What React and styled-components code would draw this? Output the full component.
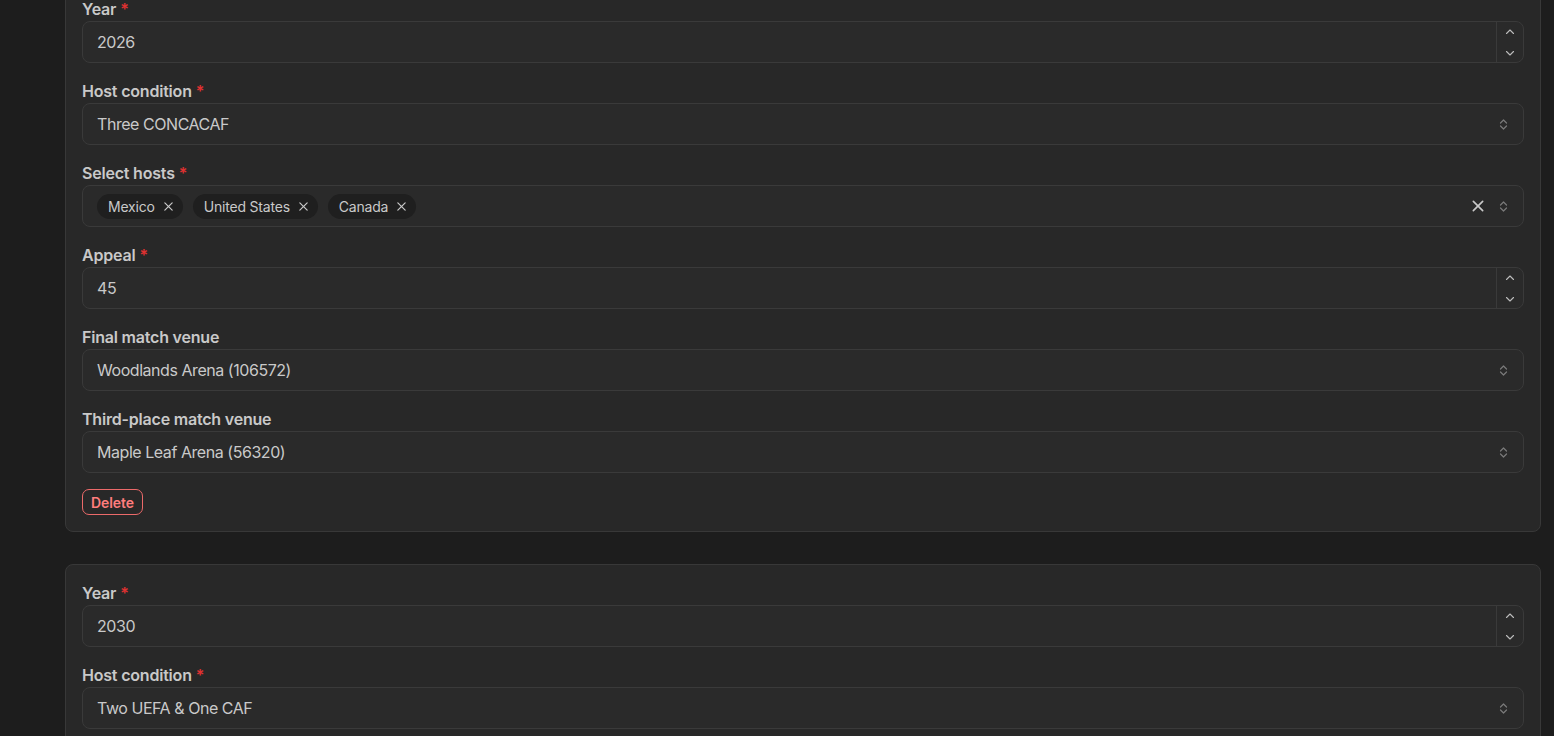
import React from 'react';
import styled, { createGlobalStyle } from 'styled-components';

const GlobalStyle = createGlobalStyle`
  html, body {
    margin: 0;
    padding: 0;
    background: #1d1d1d;
    overflow: hidden;
  }
  * { box-sizing: border-box; }
`;

const Page = styled.div`
  min-height: 100vh;
  padding: 0 13px 0 65px;
  font-family: Inter, "Noto Sans", sans-serif;
  color: #c9c9c9;
`;

const List = styled.div`
  margin-top: -20px;
  display: flex;
  flex-direction: column;
  gap: 32px;
`;

const Card = styled.section`
  background: #282828;
  border: 1px solid #383838;
  border-radius: 8px;
  padding: 16px;
  display: flex;
  flex-direction: column;
  gap: 16px;
`;

const Field = styled.div`
  display: flex;
  flex-direction: column;
`;

const Label = styled.label`
  font-size: 16px;
  font-weight: 600;
  line-height: 22px;
  margin-top: 1px;
  margin-bottom: 1px;
  letter-spacing: -0.2px;
  color: #c9c9c9;
`;

const Star = styled.span`
  color: #e03131;
  margin-left: 4px;
`;

const Box = styled.div`
  height: 42px;
  border: 1px solid #3a3a3a;
  border-radius: 8px;
  background: #2a2a2a;
  display: flex;
  align-items: center;
  padding-left: 14px;
  font-size: 16px;
  letter-spacing: -0.45px;
  color: #c9c9c9;
`;

const Value = styled.div`
  flex: 1;
`;

const Controls = styled.div`
  width: 27px;
  height: 100%;
  border-left: 1px solid #3a3a3a;
  display: flex;
  flex-direction: column;
  align-items: center;
  justify-content: space-between;
  padding: 4px 0 3px;
  color: #bdbdbd;
`;

const Chevrons = styled.div`
  width: 40px;
  display: flex;
  align-items: center;
  justify-content: center;
  color: #7a7a7a;
`;

const Pills = styled.div`
  flex: 1;
  display: flex;
  gap: 10px;
`;

const Pill = styled.span`
  height: 25px;
  border-radius: 999px;
  background: #1f1f1f;
  display: inline-flex;
  align-items: center;
  gap: 8px;
  padding: 0 9px 0 11px;
  font-size: 14px;
  letter-spacing: -0.2px;
  color: #c9c9c9;
`;

const Clear = styled.div`
  width: 20px;
  margin-right: -5px;
  display: flex;
  justify-content: center;
  color: #c9c9c9;
`;

const DangerButton = styled.button`
  align-self: flex-start;
  height: 26px;
  padding: 0 8px;
  border: 1px solid #ec6a6a;
  border-radius: 7px;
  background: transparent;
  color: #ff7d7d;
  font-family: inherit;
  font-size: 14px;
  font-weight: 600;
  letter-spacing: -0.1px;
`;

const Up = () => (
  <svg width="12" height="12" viewBox="0 0 24 24" fill="none" stroke="currentColor" strokeWidth="2.2" strokeLinecap="round" strokeLinejoin="round">
    <path d="M5 15l7-7 7 7" />
  </svg>
);

const Down = () => (
  <svg width="12" height="12" viewBox="0 0 24 24" fill="none" stroke="currentColor" strokeWidth="2.2" strokeLinecap="round" strokeLinejoin="round">
    <path d="M5 9l7 7 7-7" />
  </svg>
);

const UpDown = () => (
  <svg width="15" height="15" viewBox="0 0 15 15" fill="none">
    <path d="M4.5 6L7.5 3L10.5 6M4.5 9L7.5 12L10.5 9" stroke="currentColor" strokeWidth="1.2" strokeLinecap="round" strokeLinejoin="round" />
  </svg>
);

const Close = ({ size = 12, width = 1.5 }) => (
  <svg width={size} height={size} viewBox="0 0 12 12" fill="none" stroke="currentColor" strokeWidth={width} strokeLinecap="round">
    <path d="M2 2l8 8M10 2l-8 8" />
  </svg>
);

const NumberField = ({ label, value }) => (
  <Field>
    <Label>{label}<Star>*</Star></Label>
    <Box>
      <Value>{value}</Value>
      <Controls><Up /><Down /></Controls>
    </Box>
  </Field>
);

const SelectField = ({ label, value, required }) => (
  <Field>
    <Label>{label}{required && <Star>*</Star>}</Label>
    <Box>
      <Value>{value}</Value>
      <Chevrons><UpDown /></Chevrons>
    </Box>
  </Field>
);

const HostsField = ({ hosts }) => (
  <Field>
    <Label>Select hosts<Star>*</Star></Label>
    <Box>
      <Pills>
        {hosts.map((h) => (
          <Pill key={h}>{h}<Close size={11} width={1.3} /></Pill>
        ))}
      </Pills>
      <Clear><Close size={14} width={1.4} /></Clear>
      <Chevrons><UpDown /></Chevrons>
    </Box>
  </Field>
);

const App = () => (
  <Page>
    <GlobalStyle />
    <List>
      <Card>
        <NumberField label="Year" value="2026" />
        <SelectField label="Host condition" value="Three CONCACAF" required />
        <HostsField hosts={['Mexico', 'United States', 'Canada']} />
        <NumberField label="Appeal" value="45" />
        <SelectField label="Final match venue" value="Woodlands Arena (106572)" />
        <SelectField label="Third-place match venue" value="Maple Leaf Arena (56320)" />
        <DangerButton>Delete</DangerButton>
      </Card>
      <Card>
        <NumberField label="Year" value="2030" />
        <SelectField label="Host condition" value="Two UEFA & One CAF" required />
      </Card>
    </List>
  </Page>
);

export default App;
